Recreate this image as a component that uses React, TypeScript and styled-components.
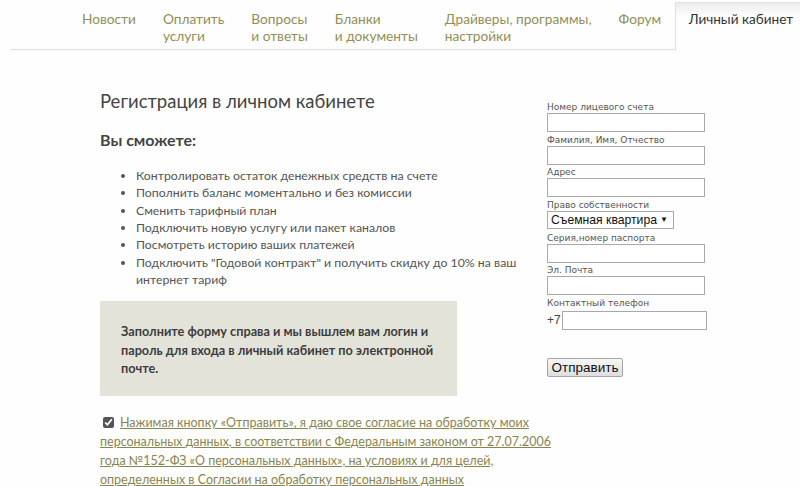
import React from 'react';
import styled, { createGlobalStyle } from 'styled-components';

const GlobalStyle = createGlobalStyle`
    html, body {
        margin: 0;
        padding: 0;
        background: #fefefe;
    }
    body {
        font-family: Lato, Roboto, 'Open Sans', sans-serif;
        color: #444;
    }
`;

const Page = styled.div`
    width: 800px;
    height: 486px;
    overflow: hidden;
`;

const Header = styled.nav`
    display: flex;
    align-items: stretch;
    margin-left: 10px;
    padding-left: 58.5px;
    height: 49px;
    border-bottom: 1px solid #dedede;
`;

const NavItem = styled.a`
    display: block;
    padding: 10px 13.5px 0;
    font-size: 13.7px;
    line-height: 17px;
    color: #938e58;
    text-decoration: none;
    white-space: nowrap;
`;

const ActiveTab = styled.a`
    display: block;
    margin-top: 2px;
    margin-bottom: -1px;
    flex: 1;
    padding: 8px 0 0 13px;
    font-size: 13.6px;
    line-height: 17px;
    color: #333;
    text-decoration: none;
    white-space: nowrap;
    border: 1px solid #dedede;
    border-right: none;
    border-bottom: none;
    background: linear-gradient(#ececec, #fefefe 14px);
`;

const Main = styled.main`
    display: flex;
    padding: 40px 0 0 100px;
`;

const Left = styled.section`
    width: 447px;
`;

const Title = styled.h1`
    margin: 0;
    font-size: 18.5px;
    font-weight: 400;
    line-height: 22px;
    color: #444;
`;

const SubTitle = styled.h2`
    margin: 18px 0 0;
    font-size: 16px;
    font-weight: 700;
    line-height: 20px;
    color: #444;
`;

const List = styled.ul`
    margin: 17px 0 0;
    padding-left: 36px;
    list-style: disc;
`;

const Item = styled.li`
    font-size: 12.3px;
    line-height: 17.35px;
    color: #555;
    max-width: 382px;
`;

const Note = styled.div`
    margin-top: 13px;
    width: 357px;
    height: 95px;
    box-sizing: border-box;
    padding: 21px 20px 0 21px;
    background: #e4e3d9;
    font-size: 12.7px;
    font-weight: 700;
    line-height: 18.5px;
    color: #3d3d3d;
`;

const Consent = styled.p`
    margin: 18px 0 0;
    width: 465px;
    font-size: 12.5px;
    line-height: 18.7px;
    color: #8a8550;
`;

const Check = styled.input`
    width: 11px;
    height: 11px;
    margin: 0 6px 0 3px;
    vertical-align: -1px;
    accent-color: #555;
`;

const ConsentLink = styled.a`
    color: #8a8550;
    text-decoration: underline;
`;

const Form = styled.form`
    display: flex;
    flex-direction: column;
    margin: 11px 0 0 0;
    width: 160px;
    font-family: 'DejaVu Sans', sans-serif;
`;

const Label = styled.label`
    font-size: 9px;
    line-height: 12px;
    color: #555;
    white-space: nowrap;
`;

const Field = styled.input<{ $w?: number }>`
    width: ${({ $w }) => $w ?? 158}px;
    height: 19px;
    box-sizing: border-box;
    margin: 0;
    border: 1px solid #a9a9a9;
    background: #fff;
    padding: 0;
`;

const Group = styled.div`
    display: flex;
    flex-direction: column;
    height: 32.67px;
`;

const SelectBox = styled.div`
    display: flex;
    align-items: center;
    justify-content: space-between;
    width: 127px;
    height: 18px;
    box-sizing: border-box;
    padding: 0 5px 0 3px;
    border: 1px solid #a9a9a9;
    background: #fff;
    font-family: 'Liberation Sans', sans-serif;
    font-size: 12.2px;
    color: #111;
    white-space: nowrap;
`;

const Arrow = styled.span`
    font-size: 8px;
`;

const PhoneRow = styled.div`
    display: flex;
    align-items: center;
    gap: 1px;
    margin-top: 2px;
    font-family: 'Liberation Sans', sans-serif;
    font-size: 12px;
    color: #444;
`;

const Button = styled.button`
    align-self: flex-start;
    margin-top: 28px;
    width: 76px;
    height: 19px;
    padding: 0;
    border: 1px solid #a5a5a5;
    border-radius: 2px;
    background: linear-gradient(#f6f6f6, #dedede);
    font-family: 'Liberation Sans', sans-serif;
    font-size: 13.5px;
    color: #111;
`;

const navItems: string[][] = [
    ['Новости'],
    ['Оплатить', 'услуги'],
    ['Вопросы', 'и ответы'],
    ['Бланки', 'и документы'],
    ['Драйверы, программы,', 'настройки'],
    ['Форум'],
];

const features = [
    'Контролировать остаток денежных средств на счете',
    'Пополнить баланс моментально и без комиссии',
    'Сменить тарифный план',
    'Подключить новую услугу или пакет каналов',
    'Посмотреть историю ваших платежей',
    'Подключить "Годовой контракт" и получить скидку до 10% на ваш интернет тариф',
];

const fields = ['Номер лицевого счета', 'Фамилия, Имя, Отчество', 'Адрес'];
const fields2 = ['Серия,номер паспорта', 'Эл. Почта'];

const App: React.FC = () => {
    return (
        <Page>
            <GlobalStyle />
            <Header>
                {navItems.map((lines) => (
                    <NavItem key={lines[0]} href="#">
                        {lines.map((l, i) => (
                            <React.Fragment key={l}>
                                {i > 0 && <br />}
                                {l}
                            </React.Fragment>
                        ))}
                    </NavItem>
                ))}
                <ActiveTab href="#">Личный кабинет</ActiveTab>
            </Header>
            <Main>
                <Left>
                    <Title>Регистрация в личном кабинете</Title>
                    <SubTitle>Вы сможете:</SubTitle>
                    <List>
                        {features.map((f) => (
                            <Item key={f}>{f}</Item>
                        ))}
                    </List>
                    <Note>
                        Заполните форму справа и мы вышлем вам логин и пароль для входа в личный кабинет по
                        электронной почте.
                    </Note>
                    <Consent>
                        <Check type="checkbox" defaultChecked />
                        <ConsentLink href="#">
                            Нажимая кнопку «Отправить», я даю свое согласие на обработку моих персональных данных, в
                            соответствии с Федеральным законом от 27.07.2006 года №152-ФЗ «О персональных данных», на
                            условиях и для целей, определенных в Согласии на обработку персональных данных
                        </ConsentLink>
                    </Consent>
                </Left>
                <Form>
                    {fields.map((f) => (
                        <Group key={f}>
                            <Label>{f}</Label>
                            <Field type="text" />
                        </Group>
                    ))}
                    <Group>
                        <Label>Право собственности</Label>
                        <SelectBox>
                            Съемная квартира <Arrow>▼</Arrow>
                        </SelectBox>
                    </Group>
                    {fields2.map((f) => (
                        <Group key={f}>
                            <Label>{f}</Label>
                            <Field type="text" />
                        </Group>
                    ))}
                    <Group>
                        <Label>Контактный телефон</Label>
                        <PhoneRow>
                            +7
                            <Field type="text" $w={145} />
                        </PhoneRow>
                    </Group>
                    <Button type="button">Отправить</Button>
                </Form>
            </Main>
        </Page>
    );
};

export default App;
